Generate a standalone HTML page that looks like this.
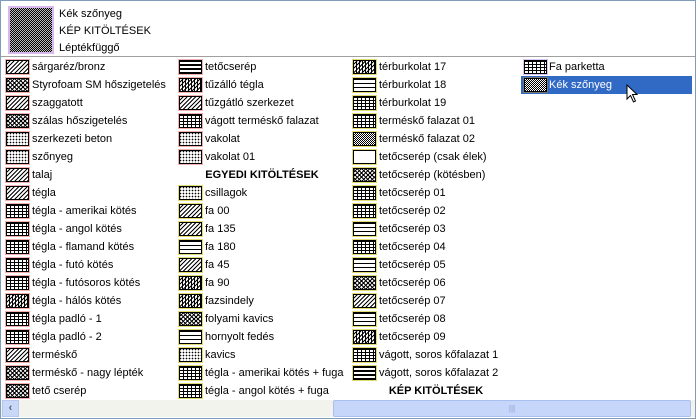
<!DOCTYPE html>
<html><head><meta charset="utf-8"><style>
*{margin:0;padding:0;box-sizing:border-box}
body{width:696px;height:419px;background:#fff;font-family:"Liberation Sans",Tahoma,sans-serif;font-size:11px;color:#000;position:relative;overflow:hidden}
.frame{position:absolute;left:0;top:0;width:696px;height:419px;border:1px solid #7f9db9}
.hdr{position:absolute;left:1px;top:1px;width:694px;height:56px;border-bottom:1px solid #a0a0a0}
.sw{position:absolute;left:7px;top:5px;width:46px;height:48px;border:2px solid #d9b8ee;background-image:repeating-conic-gradient(#000 0 25%,#bbb 0 50%);background-size:2px 2px}
.ht{position:absolute;left:58px;font-size:11px}
.col{position:absolute;top:58px}
.r{height:18px;line-height:18px;white-space:nowrap;position:relative;padding-left:28px}
.i{position:absolute;left:1px;top:1px;width:25px;height:16px;border:1px solid #f4b0b0;background-color:#fff}
.i::after{content:"";position:absolute;inset:0;border:1px solid #000}
.y .i{border-color:#e0dc70}
.h1{background-image:repeating-linear-gradient(135deg,#000 0 1px,#fff 1px 3px)}
.h2{background-image:repeating-linear-gradient(45deg,#000 0 1px,transparent 1px 3px),repeating-linear-gradient(135deg,#000 0 1px,transparent 1px 3px)}
.h3{background-image:radial-gradient(circle,#000 0 0.7px,transparent 0.9px);background-size:3px 3px}
.h4{background-image:repeating-linear-gradient(0deg,#000 0 1px,transparent 1px 3px),repeating-linear-gradient(90deg,#000 0 1px,transparent 1px 4px)}
.h5{background-image:repeating-linear-gradient(0deg,#000 0 2px,#fff 2px 4px)}
.h6{background-image:repeating-linear-gradient(90deg,#000 0 1px,transparent 1px 3px),repeating-linear-gradient(135deg,#000 0 1px,transparent 1px 3px)}
.h7{background-image:repeating-conic-gradient(#000 0 25%,#fff 0 50%);background-size:2px 2px}
.h8{background-image:repeating-linear-gradient(0deg,#000 0 1px,transparent 1px 4px)}
.b{font-weight:bold;text-align:center;padding-left:0}
.sel{background:#316ac5;color:#fff}
.sb{position:absolute;left:1px;top:400px;width:694px;height:17px;background:#f3f3ee}
.sbl{position:absolute;left:1px;top:0;width:17px;height:17px;background:#c8d8f6;border:1px solid #b4c8f0;color:#4d6185;font-size:11px;text-align:center;line-height:15px;font-weight:bold}
.th{position:absolute;left:332px;top:0;width:358px;height:17px;background:#c6d6fa;border:1px solid #a8bff0;border-radius:2px;color:#8aa3d8;text-align:center;line-height:15px;font-size:8px}
</style></head><body>
<div class="frame"></div>
<div class="hdr">
<div class="sw"></div>
<div class="ht" style="top:7px">Kék szőnyeg</div>
<div class="ht" style="top:24px">KÉP KITÖLTÉSEK</div>
<div class="ht" style="top:41px">Léptékfüggő</div>
</div>
<div class="col" style="left:4px">
<div class="r"><span class="i h1"></span>sárgaréz/bronz</div>
<div class="r"><span class="i h2"></span>Styrofoam SM hőszigetelés</div>
<div class="r"><span class="i h1"></span>szaggatott</div>
<div class="r"><span class="i h2"></span>szálas hőszigetelés</div>
<div class="r"><span class="i h3"></span>szerkezeti beton</div>
<div class="r"><span class="i h3"></span>szőnyeg</div>
<div class="r"><span class="i h1"></span>talaj</div>
<div class="r"><span class="i h1"></span>tégla</div>
<div class="r"><span class="i h4"></span>tégla - amerikai kötés</div>
<div class="r"><span class="i h4"></span>tégla - angol kötés</div>
<div class="r"><span class="i h4"></span>tégla - flamand kötés</div>
<div class="r"><span class="i h4"></span>tégla - futó kötés</div>
<div class="r"><span class="i h4"></span>tégla - futósoros kötés</div>
<div class="r"><span class="i h6"></span>tégla - hálós kötés</div>
<div class="r"><span class="i h4"></span>tégla padló - 1</div>
<div class="r"><span class="i h4"></span>tégla padló - 2</div>
<div class="r"><span class="i h1"></span>terméskő</div>
<div class="r"><span class="i h2"></span>terméskő - nagy lépték</div>
<div class="r"><span class="i h2"></span>tető cserép</div>
</div>
<div class="col" style="left:177px;width:170px">
<div class="r"><span class="i h5"></span>tetőcserép</div>
<div class="r"><span class="i h6"></span>tűzálló tégla</div>
<div class="r"><span class="i h1"></span>tűzgátló szerkezet</div>
<div class="r"><span class="i h4"></span>vágott terméskő falazat</div>
<div class="r"><span class="i h3"></span>vakolat</div>
<div class="r"><span class="i h3"></span>vakolat 01</div>
<div class="r b">EGYEDI KITÖLTÉSEK</div>
<div class="y">
<div class="r"><span class="i h3"></span>csillagok</div>
<div class="r"><span class="i h1"></span>fa 00</div>
<div class="r"><span class="i h1"></span>fa 135</div>
<div class="r"><span class="i h8"></span>fa 180</div>
<div class="r"><span class="i h1"></span>fa 45</div>
<div class="r"><span class="i h6"></span>fa 90</div>
<div class="r"><span class="i h6"></span>fazsindely</div>
<div class="r"><span class="i h2"></span>folyami kavics</div>
<div class="r"><span class="i h8"></span>hornyolt fedés</div>
<div class="r"><span class="i h3"></span>kavics</div>
<div class="r"><span class="i h4"></span>tégla - amerikai kötés + fuga</div>
<div class="r"><span class="i h4"></span>tégla - angol kötés + fuga</div>
</div></div>
<div class="col y" style="left:351px;width:170px">
<div class="r"><span class="i h6"></span>térburkolat 17</div>
<div class="r"><span class="i h8"></span>térburkolat 18</div>
<div class="r"><span class="i h4"></span>térburkolat 19</div>
<div class="r"><span class="i h4"></span>terméskő falazat 01</div>
<div class="r"><span class="i h7"></span>terméskő falazat 02</div>
<div class="r"><span class="i"></span>tetőcserép (csak élek)</div>
<div class="r"><span class="i h2"></span>tetőcserép (kötésben)</div>
<div class="r"><span class="i h4"></span>tetőcserép 01</div>
<div class="r"><span class="i h4"></span>tetőcserép 02</div>
<div class="r"><span class="i h8"></span>tetőcserép 03</div>
<div class="r"><span class="i h4"></span>tetőcserép 04</div>
<div class="r"><span class="i h8"></span>tetőcserép 05</div>
<div class="r"><span class="i h2"></span>tetőcserép 06</div>
<div class="r"><span class="i h1"></span>tetőcserép 07</div>
<div class="r"><span class="i h8"></span>tetőcserép 08</div>
<div class="r"><span class="i h6"></span>tetőcserép 09</div>
<div class="r"><span class="i h4"></span>vágott, soros kőfalazat 1</div>
<div class="r"><span class="i h5"></span>vágott, soros kőfalazat 2</div>
<div class="r b">KÉP KITÖLTÉSEK</div>
</div>
<div class="col" style="left:521px;width:171px">
<div class="r"><span class="i h4" style="left:2px;border-color:#d9c8f6"></span>Fa parketta</div>
<div class="r sel"><span class="i h7" style="left:2px;border-color:#777"></span>Kék szőnyeg</div>
</div>
<svg style="position:absolute;left:626px;top:84px" width="14" height="20" viewBox="0 0 14 20"><path d="M1 1 L1 15 L4.5 11.5 L7.5 18 L9.5 17 L6.5 10.5 L11 10.5 Z" fill="#fff" stroke="#000" stroke-width="1"/></svg>
<div class="sb"><div class="sbl">‹</div><div class="th">|||</div></div>
</body></html>
